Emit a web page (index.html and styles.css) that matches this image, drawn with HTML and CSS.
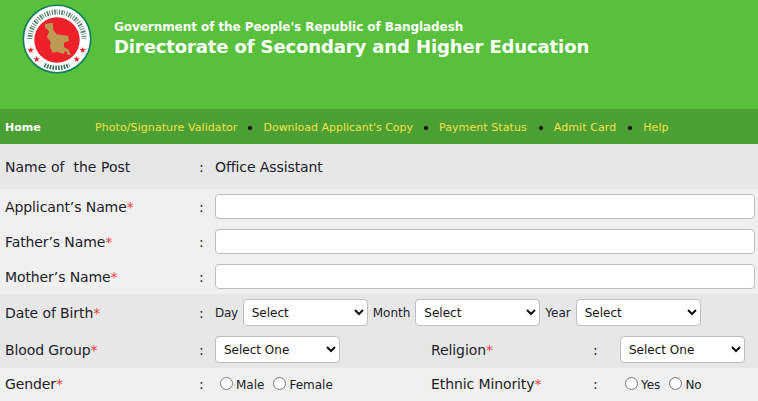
FILE: index.html
```html
<!DOCTYPE html>
<html lang="en">
<head>
<meta charset="utf-8">
<title>Directorate of Secondary and Higher Education</title>
<link rel="stylesheet" href="styles.css">
</head>
<body>
<header class="masthead">
  <svg class="logo" width="70" height="70" viewBox="0 0 70 70" aria-label="Government of Bangladesh seal">
    <defs>
      <polygon id="star" points="0,-3.2 0.8,-1 3.200,-1 1.300,0.5 2,2.800 0,1.400 -2,2.800 -1.300,0.5 -3.200,-1 -0.8,-1"/>
    </defs>
    <circle cx="35" cy="35" r="33.7" fill="#fff" stroke="#0d7d5f" stroke-width="1.6"/>
    <path d="M8 35 A27 27 0 1 1 62 35" fill="none" stroke="#4a7f66" stroke-width="5" stroke-dasharray="1 1.400 1.600 1 0.8 1.600"/>
    <path d="M22.500 61 A29 29 0 0 0 47.500 61" fill="none" stroke="#3d6f57" stroke-width="4.500" stroke-dasharray="1.600 1.200"/>
    <circle cx="35" cy="36" r="22.700" fill="#ee2029"/>
    <path d="M23 20 L30.700 18.700 L31.300 26 L34.700 30.300 L46.300 32 L47 36.700 L42 38.700 L42 43.300 L46.300 45.300 L49 51.300 L45.700 50.700 L43.700 46.700 L41.300 50 L35.300 47.700 L30.700 48.700 L28 43.300 L28.700 37.700 L24.700 32.700 L27.300 27.700 L23 23.300 Z" fill="#bc9a54"/>
    <g fill="#ee2029">
      <use href="#star" x="8.700" y="46"/>
      <use href="#star" x="60.700" y="46"/>
      <use href="#star" x="14.700" y="55.300"/>
      <use href="#star" x="54.700" y="55.300"/>
    </g>
  </svg>
  <div class="titles">
    <div class="gov">Government of the People's Republic of Bangladesh</div>
    <div class="dept">Directorate of Secondary and Higher Education</div>
  </div>
</header>
<nav class="nav">
  <a class="home" href="#">Home</a>
  <ul class="menu">
    <li><a href="#">Photo/Signature Validator</a></li>
    <li class="sep"><a href="#">Download Applicant's Copy</a></li>
    <li class="sep"><a href="#">Payment Status</a></li>
    <li class="sep"><a href="#">Admit Card</a></li>
    <li class="sep"><a href="#">Help</a></li>
  </ul>
</nav>
<main class="form">
  <div class="row post">
    <div class="label post-label">Name of &nbsp;the Post</div><div class="colon">:</div>
    <div class="value">Office Assistant</div>
  </div>
  <div class="group light">
    <div class="row text-row">
      <label class="label">Applicant’s Name<span class="req">*</span></label><div class="colon">:</div>
      <input class="field" type="text">
    </div>
    <div class="row text-row">
      <label class="label">Father’s Name<span class="req">*</span></label><div class="colon">:</div>
      <input class="field" type="text">
    </div>
    <div class="row text-row">
      <label class="label">Mother’s Name<span class="req">*</span></label><div class="colon">:</div>
      <input class="field" type="text">
    </div>
  </div>
  <div class="group dark">
    <div class="row dob">
      <label class="label">Date of Birth<span class="req">*</span></label><div class="colon">:</div>
      <div class="dates">
        <span class="mini">Day</span><select class="pick"><option>Select</option></select>
        <span class="mini">Month</span><select class="pick"><option>Select</option></select>
        <span class="mini">Year</span><select class="pick"><option>Select</option></select>
      </div>
    </div>
    <div class="row pair">
      <label class="label">Blood Group<span class="req">*</span></label><div class="colon">:</div>
      <div class="cell"><select class="pick"><option>Select One</option></select></div>
      <label class="label2">Religion<span class="req">*</span></label><div class="colon2">:</div>
      <div class="cell2"><select class="pick"><option>Select One</option></select></div>
    </div>
  </div>
  <div class="group light">
    <div class="row pair gender">
      <div class="label">Gender<span class="req">*</span></div><div class="colon">:</div>
      <div class="cell radios">
        <label class="radio"><input type="radio" name="g">Male</label>
        <label class="radio"><input type="radio" name="g">Female</label>
      </div>
      <div class="label2">Ethnic Minority<span class="req">*</span></div><div class="colon2">:</div>
      <div class="cell2 radios">
        <label class="radio"><input type="radio" name="e">Yes</label>
        <label class="radio"><input type="radio" name="e">No</label>
      </div>
    </div>
  </div>
</main>
</body>
</html>
```
FILE: styles.css
```css
* { box-sizing: border-box; }
html, body { margin: 0; padding: 0; height: 401px; overflow: hidden; }
body { font-family: "DejaVu Sans", Verdana, sans-serif; font-size: 14px; letter-spacing: -0.1px; color: #1c1c2a; background: #f0f0f0; }
.masthead { height: 109px; background: #58c03c; display: flex; align-items: flex-start; padding: 4px 0 0 22px; color: #fff; }
.logo { flex: none; }
.titles { margin-left: 22px; padding-top: 15px; font-weight: bold; }
.gov { font-size: 12px; line-height: 17px; white-space: nowrap; letter-spacing: -0.06px; }
.dept { font-size: 18px; line-height: 21px; white-space: nowrap; letter-spacing: -0.12px; }
.nav { height: 35px; background: #4b9f33; display: flex; align-items: center; font-size: 11px; letter-spacing: 0.08px; padding: 2px 0 0 5px; }
.nav a { text-decoration: none; color: #f7e34a; white-space: nowrap; }
.nav .home { color: #fff; font-weight: bold; width: 90px; letter-spacing: 0; }
.menu { list-style: none; display: flex; margin: 0; padding: 0; }
.menu li:nth-child(2) a { letter-spacing: -0.02px; }
.menu li:nth-child(n+4) { margin-left: 1px; }
.sep { display: flex; align-items: center; }
.sep::before { content: ""; width: 4px; height: 4px; border-radius: 50%; background: #000; margin: 0 11px; }
.row { display: grid; grid-template-columns: 194px 16px 1fr; align-items: center; padding-left: 5px; }
.label { white-space: nowrap; }
.post-label { letter-spacing: 0.03px; }
.post { height: 45px; background: #e7e7e7; padding-top: 1px; }
.light { background: #f0f0f0; }
.dark { background: #e7e7e7; }
.text-row { height: 35px; padding-right: 3px; }
.field { width: 100%; height: 25px; border: 1px solid #bdbdbd; border-radius: 4px; background: #fff; padding: 0 8px; display: block; }
.dob { height: 37px; }
.dates { display: flex; align-items: center; font-size: 12px; letter-spacing: 0; gap: 5px; }
.mini { white-space: nowrap; }
.mini:first-child { letter-spacing: -0.33px; }
.pick { width: 125px; height: 27px; border: 1px solid #bdbdbd; border-radius: 4px; background: #fff; font: 12px "DejaVu Sans", Verdana, sans-serif; color: #111; padding: 0 4px; }
.pair { grid-template-columns: 194px 16px 216px 162px 27px 1fr; height: 37px; }
.gender { height: 33px; padding-bottom: 2px; }
.label2 { white-space: nowrap; }
.radios { display: flex; font-size: 12px; letter-spacing: 0; gap: 9px; padding-left: 5px; padding-top: 2px; }
.radio { display: flex; align-items: center; }
.radio input { margin: 0 3px 0 0; width: 13px; height: 13px; position: relative; top: -1px; }
.req { color: #ee3a3a; }
```
